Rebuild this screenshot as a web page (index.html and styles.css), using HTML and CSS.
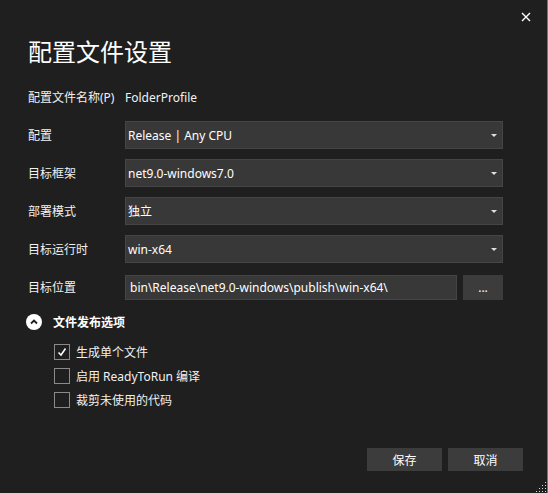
FILE: index.html
```html
<!DOCTYPE html>
<html lang="zh-CN">
<head>
  <meta charset="UTF-8">
  <title>配置文件设置</title>
  <link rel="stylesheet" href="styles.css">
</head>
<body>

  <div class="dialog">
    <button class="close-btn" title="关闭">
      <svg width="10" height="10" viewBox="0 0 10 10"><path d="M1 1 L9 9 M9 1 L1 9" stroke="#fff" stroke-width="1.4"/></svg>
    </button>

    <h1 class="title">配置文件设置</h1>

    <div class="form">
      <div class="row">
        <span class="label">配置文件名称(P)</span>
        <span class="value">FolderProfile</span>
      </div>
      <div class="row">
        <span class="label">配置</span>
        <div class="select"><span>Release | Any CPU</span><i class="caret"></i></div>
      </div>
      <div class="row">
        <span class="label">目标框架</span>
        <div class="select"><span>net9.0-windows7.0</span><i class="caret"></i></div>
      </div>
      <div class="row">
        <span class="label">部署模式</span>
        <div class="select"><span>独立</span><i class="caret"></i></div>
      </div>
      <div class="row">
        <span class="label">目标运行时</span>
        <div class="select"><span>win-x64</span><i class="caret"></i></div>
      </div>
      <div class="row">
        <span class="label">目标位置</span>
        <div class="path-box">bin\Release\net9.0-windows\publish\win-x64\</div>
        <button class="browse-btn">...</button>
      </div>
    </div>

    <div class="section-head">
      <span class="collapse-icon">
        <svg width="16" height="16" viewBox="0 0 16 16">
          <circle cx="8" cy="8" r="8" fill="#fff"/>
          <path d="M5 9.5 L8 6.5 L11 9.5" fill="none" stroke="#1f1f1f" stroke-width="1.8"/>
        </svg>
      </span>
      <span class="section-title">文件发布选项</span>
    </div>

    <div class="options">
      <label class="option">
        <span class="checkbox checked">
          <svg width="12" height="12" viewBox="0 0 12 12"><path d="M2.5 6.5 L5 9 L9.5 2.5" fill="none" stroke="#fff" stroke-width="1.5"/></svg>
        </span>
        生成单个文件
      </label>
      <label class="option"><span class="checkbox"></span>启用 ReadyToRun 编译</label>
      <label class="option"><span class="checkbox"></span>裁剪未使用的代码</label>
    </div>

    <div class="footer">
      <button class="btn">保存</button>
      <button class="btn">取消</button>
    </div>

    <div class="grip"></div>
  </div>

</body>
</html>
```

FILE: styles.css
```css
html, body {
  margin: 0;
  padding: 0;
  height: 100%;
}

body {
  background: #1f1f1f;
  color: #f1f1f1;
  font-family: 'Segoe UI', 'Noto Sans', 'Noto Sans CJK SC', sans-serif;
  font-size: 12px;
  overflow: hidden;
}

.dialog {
  position: relative;
  box-sizing: border-box;
  height: 493px;
  padding: 35px 44px 22px 28px;
  border-right: 1px solid #7161de;
  display: flex;
  flex-direction: column;
}

.close-btn {
  position: absolute;
  top: 11px;
  right: 15px;
  width: 12px;
  height: 12px;
  padding: 0;
  border: none;
  background: none;
  display: flex;
  align-items: center;
  justify-content: center;
}

.title {
  margin: 0 0 16px;
  font-size: 24px;
  font-weight: normal;
  line-height: 32px;
  color: #fff;
  font-family: 'Noto Sans CJK SC', sans-serif;
}

.form {
  display: flex;
  flex-direction: column;
  gap: 10px;
}

.row {
  display: flex;
  align-items: center;
  height: 28px;
}

.label {
  width: 97px;
  flex-shrink: 0;
}

.value {
  color: #f1f1f1;
}

.select {
  flex: 1;
  box-sizing: border-box;
  height: 28px;
  background: #383838;
  border: 1px solid #454545;
  display: flex;
  align-items: center;
  justify-content: space-between;
  padding: 0 5px 0 2px;
  color: #fff;
}

.caret {
  width: 0;
  height: 0;
  border-left: 3px solid transparent;
  border-right: 3px solid transparent;
  border-top: 3px solid #e0e0e0;
  margin-top: 1px;
}

.path-box {
  flex: 1;
  box-sizing: border-box;
  height: 25px;
  line-height: 23px;
  background: #383838;
  border: 1px solid #454545;
  padding: 0 4px;
  color: #fff;
  white-space: nowrap;
  overflow: hidden;
}

.browse-btn {
  width: 40px;
  height: 25px;
  margin-left: 6px;
  background: #3c3c3c;
  border: none;
  color: #fff;
  font-family: inherit;
  font-size: 12px;
  padding: 0;
}

.section-head {
  display: flex;
  align-items: center;
  height: 20px;
  margin-top: 11px;
  margin-left: -2px;
}

.collapse-icon {
  display: flex;
  width: 16px;
  height: 16px;
}

.section-title {
  margin-left: 11px;
  font-weight: bold;
  color: #fff;
}

.options {
  display: flex;
  flex-direction: column;
  margin-top: 8px;
  margin-left: 26px;
}

.option {
  display: flex;
  align-items: center;
  height: 24px;
  gap: 6px;
}

.checkbox {
  box-sizing: border-box;
  width: 16px;
  height: 16px;
  border: 1px solid #8a8a8a;
  display: flex;
  align-items: center;
  justify-content: center;
}

.footer {
  margin-top: auto;
  display: flex;
  justify-content: flex-end;
  gap: 6px;
  margin-right: -20px;
}

.btn {
  width: 75px;
  height: 23px;
  background: #3c3c3c;
  border: none;
  color: #fff;
  font-family: 'Noto Sans CJK SC', sans-serif;
  font-size: 12px;
  padding: 0;
}

/* resize handle dots in the corner */
.grip {
  position: absolute;
  right: 1px;
  bottom: 1px;
  width: 11px;
  height: 11px;
  background:
    radial-gradient(circle, #d8d8d8 0.9px, transparent 1px) 0 0 / 3px 3px;
  clip-path: polygon(100% 0, 100% 100%, 0 100%);
}
```
